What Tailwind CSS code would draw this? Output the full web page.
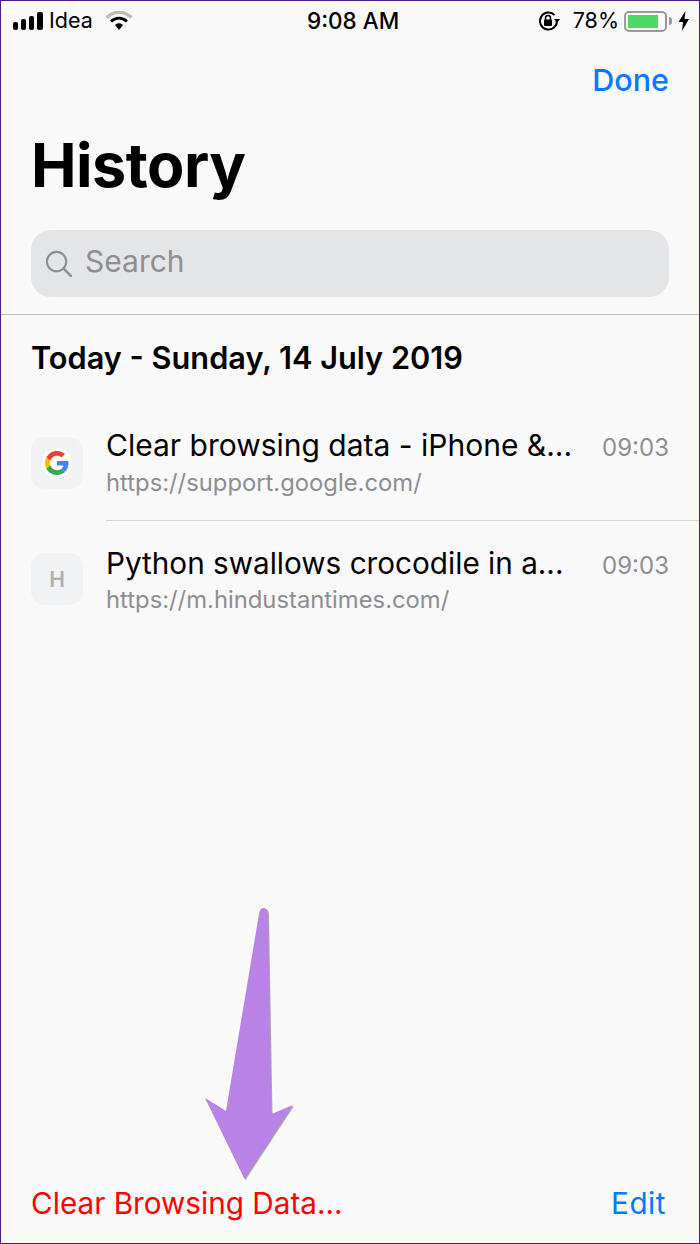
<!DOCTYPE html>
<html lang="en">
<head>
  <meta charset="UTF-8" />
  <meta name="viewport" content="width=device-width, initial-scale=1.0"/>
  <title>History</title>
  <script src="https://cdn.jsdelivr.net/npm/@tailwindcss/browser@4"></script>
</head>
<body class="bg-[#f9f9f9]">
  <div class="relative w-[700px] h-[1244px] border border-[#4a1a8a] bg-[#f9f9f9] flex flex-col font-['Inter',sans-serif] text-black overflow-hidden">

    <!-- Status bar -->
    <div class="flex items-center h-[38px] shrink-0 pl-[11px] pr-[9px] pt-[2px]">
      <div class="flex items-center w-[295px]">
        <svg width="32" height="20" viewBox="0 0 32 20" class="mr-[5px]">
          <rect x="1" y="11" width="5" height="8" rx="2" fill="#000"/>
          <rect x="9" y="8" width="5" height="11" rx="2" fill="#000"/>
          <rect x="17" y="5" width="5" height="14" rx="2" fill="#000"/>
          <rect x="25" y="1" width="6" height="18" rx="2" fill="#000"/>
        </svg>
        <span class="text-[21.500px] leading-none">Idea</span>
        <svg width="28" height="20" viewBox="0 0 28 20" class="ml-[12px]">
          <path d="M1.500 6.500 C9 -0.500 19 -0.500 26.500 6.500" fill="none" stroke="#bdbdbd" stroke-width="3.400"/>
          <path d="M6 10.500 C11 6 17 6 22 10.500" fill="none" stroke="#000" stroke-width="3"/>
          <path d="M10 14 C12.500 11.500 15.500 11.500 18 14 L14 19 Z" fill="#000"/>
        </svg>
      </div>
      <span class="text-[22.500px] leading-none font-medium">9:08 AM</span>
      <div class="flex items-center justify-end ml-auto">
        <svg width="24" height="22" viewBox="0 0 24 22">
          <path d="M20 11 A8.500 8.500 0 1 1 17.500 5" fill="none" stroke="#000" stroke-width="2"/>
          <path d="M17 9 L23 9 L20 13 Z" fill="#000"/>
          <rect x="7" y="9.500" width="8" height="6.500" rx="1" fill="#000"/>
          <path d="M8.500 10 V8 A2.500 2.500 0 0 1 13.500 8 V10" fill="none" stroke="#000" stroke-width="1.500"/>
        </svg>
        <span class="text-[21.500px] leading-none ml-[12px]">78%</span>
        <div class="ml-[5px] w-[43px] h-[21px] border-2 border-[#9a9a9a] rounded-[5px] p-[2px]">
          <div class="w-[30px] h-full bg-[#4cd964]"></div>
        </div>
        <div class="w-[3px] h-[8px] bg-[#9a9a9a] ml-[2px] rounded-r-sm"></div>
        <svg width="12" height="20" viewBox="0 0 12 20" class="ml-[6px]">
          <path d="M7.500 0 L0.500 11 H5 L4 20 L11 8 H6.500 Z" fill="#000"/>
        </svg>
      </div>
    </div>

    <!-- Nav -->
    <div class="flex justify-end mt-[20px] h-[42px] shrink-0 pr-[30px] items-center">
      <span class="text-[30.500px] leading-none font-medium text-[#007aff]">Done</span>
    </div>

    <!-- Title -->
    <h1 class="mt-[30px] pl-[30px] text-[61px] leading-[68px] font-bold tracking-[-0.5px]">History</h1>

    <!-- Search -->
    <div class="mx-[30px] mt-[31px] h-[67px] rounded-[20px] bg-[#e4e5e7] flex items-center pl-[14px] pb-[6px] shrink-0">
      <svg width="27" height="27" viewBox="0 0 28 28" class="mt-[5px]">
        <circle cx="12" cy="12" r="10" fill="none" stroke="#8e8e93" stroke-width="2.200"/>
        <path d="M19 19 L27 27" stroke="#8e8e93" stroke-width="2.600" stroke-linecap="round"/>
      </svg>
      <span class="ml-[13px] text-[30px] leading-none text-[#8e8e93]">Search</span>
    </div>

    <!-- Section header -->
    <div class="mt-[17px] h-[91px] shrink-0 border-t border-[#bcbcbf] flex items-center pl-[30px] pb-[4px]">
      <span class="text-[30.700px] leading-none font-semibold">Today - Sunday, 14 July 2019</span>
    </div>

    <!-- History rows -->
    <div class="flex flex-col">
      <div class="flex h-[116px]">
        <div class="ml-[30px] mt-[32px] w-[52px] h-[52px] rounded-[14px] bg-[#f1f2f4] flex items-center justify-center shrink-0">
          <div class="w-[30px] h-[30px] rounded-full bg-white flex items-center justify-center">
            <svg width="24" height="24" viewBox="0 0 48 48">
              <path fill="#EA4335" d="M24 9.500c3.500 0 6.700 1.300 9.200 3.400l6.900-6.900C35.900 2.400 30.300 0 24 0 14.600 0 6.500 5.400 2.600 13.200l8 6.200C12.500 13.600 17.800 9.500 24 9.500z"/>
              <path fill="#4285F4" d="M47 24.500c0-1.600-.1-3.100-.4-4.500H24v9h12.900c-.6 3-2.300 5.500-4.800 7.200l7.700 6C44.300 38 47 31.800 47 24.500z"/>
              <path fill="#FBBC05" d="M10.600 28.600c-.5-1.400-.8-3-.8-4.600s.3-3.200.8-4.600l-8-6.200C.9 16.500 0 20.100 0 24s.9 7.500 2.600 10.800l8-6.200z"/>
              <path fill="#34A853" d="M24 48c6.500 0 11.900-2.100 15.900-5.800l-7.700-6c-2.200 1.400-4.900 2.300-8.200 2.300-6.200 0-11.500-4.200-13.400-9.900l-8 6.200C6.500 42.600 14.600 48 24 48z"/>
            </svg>
          </div>
        </div>
        <div class="ml-[23px] flex-1 border-b border-[#d5d5d7] flex pr-[30px]">
          <div class="flex-1 pt-[20px]">
            <div class="text-[30px] leading-[40px]">Clear browsing data - iPhone &amp;...</div>
            <div class="text-[23.800px] leading-[30px] mt-[3px] text-[#8e8e93]">https://support.google.com/</div>
          </div>
          <span class="mt-[29px] text-[24px] leading-[28px] text-[#8e8e93]">09:03</span>
        </div>
      </div>
      <div class="flex h-[117px]">
        <div class="ml-[30px] mt-[32px] w-[52px] h-[52px] rounded-[14px] bg-[#f1f2f4] flex items-center justify-center shrink-0">
          <span class="text-[21px] leading-none font-semibold text-[#b0b0b0]">H</span>
        </div>
        <div class="ml-[23px] flex-1 flex pr-[30px]">
          <div class="flex-1 pt-[22px]">
            <div class="text-[29.700px] leading-[40px]">Python swallows crocodile in a...</div>
            <div class="text-[23.800px] leading-[30px] mt-[2px] text-[#8e8e93]">https://m.hindustantimes.com/</div>
          </div>
          <span class="mt-[31px] text-[24px] leading-[28px] text-[#8e8e93]">09:03</span>
        </div>
      </div>
    </div>

    <!-- Toolbar -->
    <div class="mt-auto flex justify-between items-center h-[40px] mb-[19px] pl-[30px] pr-[33px] shrink-0 text-[29.700px] leading-none">
      <span class="text-[#ff0000]">Clear Browsing Data...</span>
      <span class="text-[#007aff] tracking-[0.5px]">Edit</span>
    </div>

    <!-- Annotation arrow -->
    <svg class="absolute left-[-1px] top-[-1px] pointer-events-none" width="700" height="1244" viewBox="0 0 700 1244">
      <path d="M259 914 Q259.500 908 263.500 908 Q268 908 268 914 L271.500 1114 L293 1105 L244.500 1179 L205 1098 L226 1111 Z" fill="#888" transform="translate(1 1)" opacity="0.7"/>
      <path d="M259 914 Q259.500 908 263.500 908 Q268 908 268 914 L271.500 1114 L293 1105 L244.500 1179 L205 1098 L226 1111 Z" fill="#b882e6"/>
    </svg>
  </div>
</body>
</html>
